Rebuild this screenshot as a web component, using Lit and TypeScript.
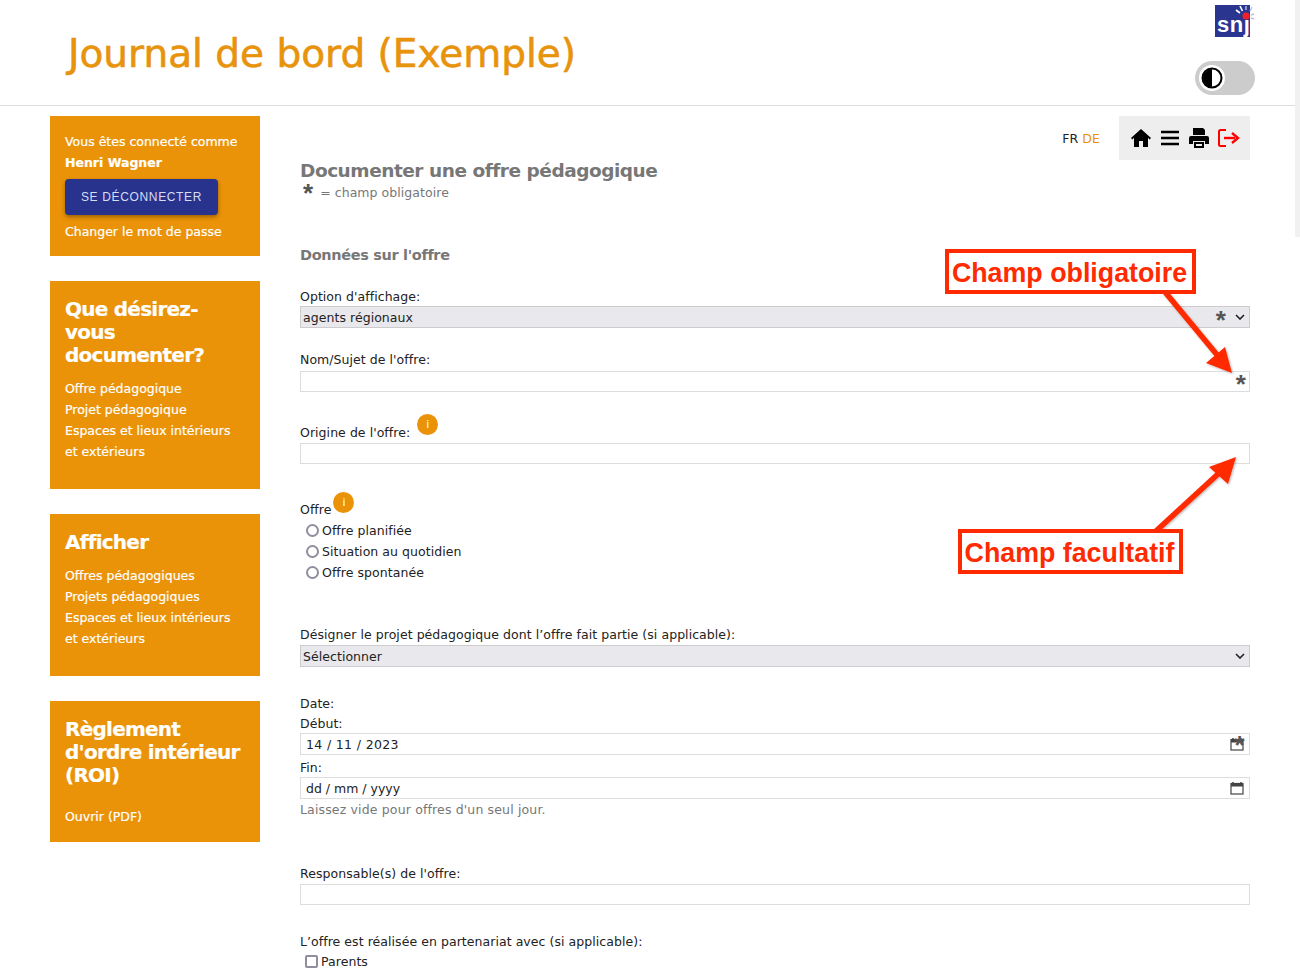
import { LitElement, html, css, svg } from "lit";
import { customElement } from "lit/decorators.js";

const chevron = html`<svg class="chev" viewBox="0 0 10 6" width="10" height="6"><path d="M1 1l4 4 4-4" fill="none" stroke="#222" stroke-width="1.6"/></svg>`;
const cal = html`<svg class="cal" viewBox="0 0 14 14" width="14" height="14"><path d="M3 1v2M11 1v2" stroke="#444" stroke-width="1.5"/><rect x="1" y="2.5" width="12" height="10.5" fill="none" stroke="#444" stroke-width="1.2"/><rect x="1" y="2.5" width="12" height="3" fill="#444"/></svg>`;
const info = html`<span class="info">i</span>`;

@customElement("app-root")
export class AppRoot extends LitElement {
  static styles = css`
    :host { display: block; position: relative; width: 1300px; height: 975px; overflow: hidden; background: #fff;
      font-family: "DejaVu Sans", sans-serif; font-size: 12.5px; letter-spacing: 0.055px; color: #222; }
    * { box-sizing: border-box; }
    header { height: 106px; border-bottom: 1px solid #ddd; display: flex; justify-content: space-between; padding: 0 45px 0 68px; }
    h1 { margin: 31px 0 0; font-size: 39px; line-height: 46px; font-weight: 400; color: #e8930c; letter-spacing: 0; -webkit-text-stroke: 0.6px #e8930c; }
    .hright { display: flex; flex-direction: column; align-items: flex-end; padding-top: 5px; }
    .logo { display: block; }
    .toggle { margin-top: 23px; width: 60px; height: 34px; border-radius: 17px; background: #ccc; padding: 4px; }
    .knob { width: 26px; height: 26px; border-radius: 50%; background: #fff; display: flex; align-items: center; justify-content: center; }
    .body { display: flex; padding: 10px 50px 0; gap: 40px; }
    aside { width: 210px; display: flex; flex-direction: column; gap: 25px; flex: none; }
    .card { background: #ea9308; color: #fff; padding: 15px; line-height: 21px; font-size: 12.5px; letter-spacing: 0; -webkit-text-stroke: 0.2px #fff; }
    .card.first { padding-bottom: 14px; }
    .card h3 { margin: 2px 0 -2px; font-size: 20px; line-height: 23px; font-weight: 700; letter-spacing: -0.75px; }
    .links { margin-top: 13px; padding-bottom: 12px; font-size: 12.5px; }
    .links.last { margin-top: 21px; padding-bottom: 0; }
    .name { font-weight: 700; }
    button { display: block; margin: 6px 0; width: 153px; height: 36px; border: 0; border-radius: 4px; background: #27338d; color: #d8dcf2;
      font-family: "Liberation Sans", sans-serif; font-size: 12px; letter-spacing: 0.65px; box-shadow: 0 2px 4px rgba(0,0,0,.35); -webkit-text-stroke: 0; }
    main { width: 950px; flex: none; }
    .top { display: flex; justify-content: flex-end; align-items: center; height: 44px; margin-bottom: -2px; }
    .lang { font-size: 12.5px; margin-right: 19px; }
    .lang b { font-weight: 400; color: #ea9308; }
    .tools { width: 131px; height: 44px; background: #eee; display: flex; align-items: center; padding-left: 12px; gap: 9px; }
    h2 { margin: 0; height: 24px; font-size: 18.5px; line-height: 26px; font-weight: 700; color: #777; letter-spacing: -0.47px; }
    .legend { line-height: 21px; color: #777; display: flex; align-items: center; padding-left: 3px; }
    .star { font-family: "Liberation Sans", sans-serif; font-size: 26px; font-weight: 700; line-height: 14px; color: #555; height: 14px; }
    .legend .star { margin-right: 7px; }
    h4 { margin: 42px 0 0; font-size: 14.5px; line-height: 21px; font-weight: 700; color: #777; letter-spacing: -0.34px; }
    .label { line-height: 22px; height: 20px; margin-bottom: 1px; }
    .mt2 { margin-top: 2px; } .mt20 { margin-top: 20px; } .mt21 { margin-top: 21px; } .mt30 { margin-top: 30px; } .mt35 { margin-top: 35px; } .mt41 { margin-top: 41px; }
    .mt26 { margin-top: 26px; } .mt44 { margin-top: 44px; } .mb0 { margin-bottom: 0; } .mb2 { margin-bottom: 2px; }
    .select { height: 22px; background: #e8e8ed; border: 1px solid #ccc; display: flex; align-items: center; padding: 0 4px 0 2px; justify-content: space-between; }
    .select .r { display: flex; align-items: center; gap: 9px; }
    .select .star { position: relative; top: 3px; }
    .input { display: block; width: 100%; height: 22px; border: 1px solid #ddd; background: #fff; padding: 0 5px; display: flex; align-items: center; justify-content: space-between; position: relative; }
    .input.tall { height: 21px; }
    .input .star { position: absolute; right: 3px; top: 5px; }
    .date { padding-right: 5px; font-size: 12.5px; letter-spacing: 0.35px; }
    .date.empty { letter-spacing: 0; }
    .cal { display: block; }
    .input .dstar { right: 4px; top: 4px; }
    .hint { line-height: 22px; height: 20px; color: #777; letter-spacing: 0.15px; }
    .info { display: inline-flex; width: 21px; height: 21px; border-radius: 50%; background: #ea9308; color: #fff; align-items: center; justify-content: center; font-size: 11px; position: relative; top: -9px; }
    .label.with { display: flex; align-items: center; padding-top: 2px; }
    .o1 { margin-left: 7px; } .o2 { margin-left: 2px; }
    .o2 .info { top: -8px; }
    .radio { height: 21px; display: flex; align-items: center; padding-left: 6px; gap: 3px; }
    .radio i { display: block; width: 13px; height: 13px; border-radius: 50%; border: 2px solid #8e8e9e; background: #fff; }
    .check { height: 20px; display: flex; align-items: center; padding-left: 5px; gap: 3px; }
    .check i { display: block; width: 13px; height: 13px; border-radius: 2px; border: 2px solid #8e8e9e; background: #fff; }
    .mt1 { margin-top: 1px; }
    .overlay { position: absolute; left: 0; top: 0; pointer-events: none; }
    .note { position: absolute; border: 4px solid #ff2a00; background: #fff; color: #ff2a00; font-family: "Liberation Sans", sans-serif; font-weight: 700; font-size: 26.8px; height: 45px; padding: 3px 2px 0 0; display: flex; align-items: center; justify-content: center; white-space: nowrap; letter-spacing: 0; }
    .n1 { left: 945px; top: 249px; width: 251px; }
    .n2 { left: 958px; top: 529px; width: 225px; }
    .sb { position: absolute; right: 0; top: 0; width: 5px; height: 237px; background: #f1f1f1; }
  `;

  render() {
    return html`
      <header>
        <h1>Journal de bord (Exemple)</h1>
        <div class="hright">
          <svg class="logo" width="40" height="33" viewBox="0 0 40 33">
            <rect width="35" height="32" fill="#2a3590"/>
            <text x="2" y="27" font-family="Liberation Sans" font-weight="700" font-size="22" letter-spacing="0.5" fill="#fff">snj</text>
            <path d="M25 1l2.5 5M21 5l4 3" stroke="#fff" stroke-width="1.6"/>
            <circle cx="31" cy="11" r="3.6" fill="#f0202a"/>
            <path d="M31 1v4M37 2l-2 4M39 9l-3 1M39 14l-3-1" stroke="#b8bfe6" stroke-width="1.4"/>
          </svg>
          <div class="toggle"><div class="knob">
            <svg width="22" height="22" viewBox="0 0 22 22"><circle cx="11" cy="11" r="9.5" fill="#fff" stroke="#000" stroke-width="2"/><path d="M11 2a9 9 0 0 0 0 18z" fill="#000"/></svg>
          </div></div>
        </div>
      </header>
      <div class="body">
        <aside>
          <div class="card first">
            <div>Vous êtes connecté comme</div>
            <div class="name">Henri Wagner</div>
            <button>SE DÉCONNECTER</button>
            <div>Changer le mot de passe</div>
          </div>
          <div class="card">
            <h3>Que désirez-vous documenter?</h3>
            <div class="links">Offre pédagogique<br>Projet pédagogique<br>Espaces et lieux intérieurs<br>et extérieurs</div>
          </div>
          <div class="card">
            <h3>Afficher</h3>
            <div class="links">Offres pédagogiques<br>Projets pédagogiques<br>Espaces et lieux intérieurs<br>et extérieurs</div>
          </div>
          <div class="card">
            <h3>Règlement d'ordre intérieur (ROI)</h3>
            <div class="links last">Ouvrir (PDF)</div>
          </div>
        </aside>
        <main>
          <div class="top">
            <div class="lang">FR <b>DE</b></div>
            <div class="tools">
              <svg width="20" height="18" viewBox="0 0 20 18"><path d="M10 0L0 9l1.3 1.4L3 8.8V18h5v-6h4v6h5V8.8l1.7 1.6L20 9z"/></svg>
              <svg width="20" height="16" viewBox="0 0 20 16"><path d="M1 2h18M1 8h18M1 14h18" stroke="#000" stroke-width="2.6"/></svg>
              <svg width="20" height="20" viewBox="0 0 20 20"><path d="M4 0h10l2 2v5H4z"/><path d="M2 8h16a2 2 0 0 1 2 2v6h-4v-3H4v3H0v-6a2 2 0 0 1 2-2z"/><path d="M5 14h10v6H5zM7 16v2h6v-2z" fill-rule="evenodd"/></svg>
              <svg width="22" height="18" viewBox="0 0 22 18"><path d="M8 1H2.5A1.5 1.5 0 0 0 1 2.5v13A1.5 1.5 0 0 0 2.5 17H8" fill="none" stroke="#f00" stroke-width="2"/><path d="M6 9h11" stroke="#f00" stroke-width="2.4"/><path d="M14 4l6 5-6 5" fill="none" stroke="#f00" stroke-width="2.4"/></svg>
            </div>
          </div>
          <h2>Documenter une offre pédagogique</h2>
          <div class="legend"><span class="star">*</span><span>= champ obligatoire</span></div>
          <h4>Données sur l'offre</h4>
          <div class="label mt20 mb0">Option d'affichage:</div>
          <div class="select"><span>agents régionaux</span><span class="r"><span class="star">*</span>${chevron}</span></div>
          <div class="label mt21 mb2">Nom/Sujet de l'offre:</div>
          <div class="input tall"><span></span><span class="star">*</span></div>
          <div class="label mt30 with">Origine de l'offre:<span class="o1">${info}</span></div>
          <div class="input tall"></div>
          <div class="label mt35 with">Offre<span class="o2">${info}</span></div>
          <div class="radio mt1"><i></i>Offre planifiée</div>
          <div class="radio"><i></i>Situation au quotidien</div>
          <div class="radio"><i></i>Offre spontanée</div>
          <div class="label mt41">Désigner le projet pédagogique dont l’offre fait partie (si applicable):</div>
          <div class="select"><span>Sélectionner</span>${chevron}</div>
          <div class="label mt26 mb0">Date:</div>
          <div class="label mb0">Début:</div>
          <div class="input date">14 / 11 / 2023 ${cal}<span class="star dstar">*</span></div>
          <div class="label mt2 mb0">Fin:</div>
          <div class="input date empty">dd / mm / yyyy ${cal}</div>
          <div class="hint">Laissez vide pour offres d'un seul jour.</div>
          <div class="label mt44">Responsable(s) de l'offre:</div>
          <div class="input tall"></div>
          <div class="label mt26 mb0">L’offre est réalisée en partenariat avec (si applicable):</div>
          <div class="check"><i></i>Parents</div>
        </main>
      </div>
      <svg class="overlay" width="1300" height="975" viewBox="0 0 1300 975">
        ${svg`<defs><filter id="s" x="-20%" y="-20%" width="140%" height="140%"><feDropShadow dx="1" dy="1" stdDeviation="1" flood-opacity=".3"/></filter></defs>
        <g filter="url(#s)" fill="#ff2a00" stroke="#ff2a00">
          <path d="M1165 292L1218 356" stroke-width="5.5"/>
          <path d="M1232 373L1206 363L1225 347z" stroke="none"/>
          <path d="M1156 531L1218 474" stroke-width="5.5"/>
          <path d="M1236 457L1209 467L1228 484z" stroke="none"/>
        </g>`}
      </svg>
      <div class="note n1">Champ obligatoire</div>
      <div class="note n2">Champ facultatif</div>
      <div class="sb"></div>
    `;
  }
}
